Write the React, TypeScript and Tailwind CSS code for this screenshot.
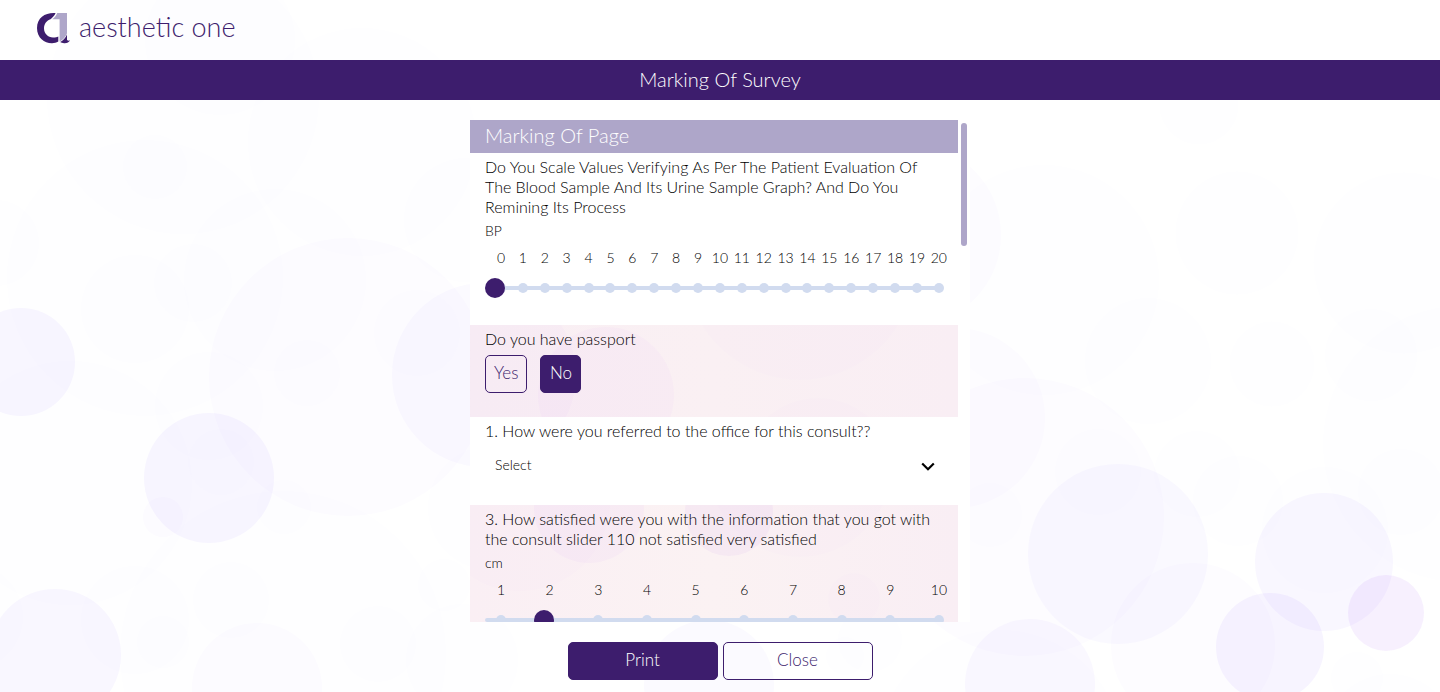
import { useState } from "react";

type Bubble = [cx: number, cy: number, r: number, fill: string];

const FAINT = "#6d4bff02";
const SOFT = "#7a3cff04";
const MEDIUM = "#6a3cff09";
const PINK = "#9a3cf014";

const bubbles: Bubble[] = [
  [145, 278, 138, FAINT],
  [183, 98, 136, FAINT],
  [220, 40, 75, FAINT],
  [362, 142, 114, FAINT],
  [275, 280, 91, FAINT],
  [135, 309, 54, FAINT],
  [193, 283, 39, FAINT],
  [155, 167, 32, FAINT],
  [466, 220, 62, FAINT],
  [-4, 243, 43, FAINT],
  [348, 377, 139, SOFT],
  [484, 375, 92, "#6a3cff07"],
  [307, 373, 33, FAINT],
  [417, 333, 43, FAINT],
  [209, 406, 54, FAINT],
  [70, 483, 122, FAINT],
  [209, 478, 65, "#6a3cff0c"],
  [21, 362, 54, "#6a3cff0c"],
  [163, 517, 20, SOFT],
  [221, 462, 33, FAINT],
  [284, 507, 27, FAINT],
  [490, 508, 62, FAINT],
  [283, 654, 163, FAINT],
  [135, 620, 54, FAINT],
  [163, 642, 26, FAINT],
  [231, 600, 38, FAINT],
  [257, 688, 65, SOFT],
  [378, 644, 38, FAINT],
  [462, 660, 56, FAINT],
  [444, 585, 26, FAINT],
  [-30, 617, 53, FAINT],
  [55, 655, 66, "#6a3cff0b"],
  [709, 685, 65, "#6a3cff07"],
  [845, 656, 19, FAINT],
  [870, 640, 32, FAINT],
  [910, 235, 91, SOFT],
  [955, 418, 90, SOFT],
  [1044, 280, 115, FAINT],
  [1148, 361, 63, FAINT],
  [1237, 233, 62, "#6d4bff01"],
  [1199, 105, 40, "#6d4bff01"],
  [1272, 364, 43, "#6d4bff01"],
  [1404, 263, 91, "#6d4bff01"],
  [1371, 355, 46, FAINT],
  [1461, 444, 138, FAINT],
  [1025, 517, 139, SOFT],
  [1098, 472, 43, FAINT],
  [990, 515, 32, FAINT],
  [1118, 554, 90, "#6a3cff08"],
  [1197, 474, 43, FAINT],
  [1238, 501, 45, FAINT],
  [1325, 530, 63, FAINT],
  [1401, 492, 43, FAINT],
  [1324, 562, 69, "#6a3cff0a"],
  [1193, 645, 82, SOFT],
  [1270, 647, 54, "#6a3cff0e"],
  [1030, 684, 65, MEDIUM],
  [1000, 752, 122, FAINT],
  [1386, 613, 38, PINK],
  [1357, 678, 26, FAINT],
  [1390, 740, 66, FAINT],
];

function PageBackdrop() {
  return (
    <svg
      className="pointer-events-none absolute inset-0 h-full w-full"
      viewBox="0 0 1440 692"
      preserveAspectRatio="xMidYMid slice"
      aria-hidden="true"
    >
      {bubbles.map(([cx, cy, r, fill], i) => (
        <circle key={i} cx={cx} cy={cy} r={r} fill={fill} />
      ))}
    </svg>
  );
}

function TintBackdrop({ shapes }: { shapes: Bubble[] }) {
  return (
    <svg className="pointer-events-none absolute inset-0 h-full w-full" aria-hidden="true">
      {shapes.map(([cx, cy, r, fill], i) => (
        <circle key={i} cx={cx} cy={cy} r={r} fill={fill} />
      ))}
    </svg>
  );
}

function Logo() {
  return (
    <a href="#" className="flex items-center gap-[9px] text-[#3d1d6d]">
      <svg width="34" height="32" viewBox="0 0 34 32" aria-hidden="true">
        <path
          d="M19.600 1C10 .2 1 5 1 16c0 10 7.500 15.300 15 15.200 2.400 0 4.500-.5 6.300-1.600v-5.200c-1.600.8-3.200 1.200-5.300 1.100-5-.2-9-3.700-9-9.200 0-4.600 2.800-7.700 6.500-9.100C16.500 6 18.400 3.600 19.600 1Z"
          fill="#3d1d6d"
        />
        <path d="M21.200 1H31v20.500c-1.500 3.500-3.800 6.300-7.400 8V7.200h-7.400C18.600 5.600 20.300 3.600 21.200 1Z" fill="#aea6c9" />
        <path d="M31 22.500v5.100c0 .9 1 1.300 3 .9-1 1.600-2.700 2.600-5.300 2.700-1.700.1-3.300-.2-4.500-1.100C27 28.500 29.600 26 31 22.500Z" fill="#3d1d6d" />
      </svg>
      <span className="pb-0.5 text-[27px] leading-8 font-light">aesthetic one</span>
    </a>
  );
}

function ScaleSlider({ id, unit, min, max, initial }: { id: string; unit: string; min: number; max: number; initial: number }) {
  const [value, setValue] = useState(initial);
  const ticks = Array.from({ length: max - min + 1 }, (_, i) => min + i);
  return (
    <div className="pt-1">
      <label htmlFor={id} className="block text-sm leading-5">
        {unit}
      </label>
      <div className="-mr-px mt-[7px] flex justify-between pl-[11px] text-sm leading-5">
        {ticks.map((t) => (
          <span key={t} className="flex w-[10px] justify-center">
            {t}
          </span>
        ))}
      </div>
      <div className="relative mt-2 h-6">
        <div className="flex h-full items-center">
          <div className="h-1 flex-1 rounded-full bg-[#d1dbef]" />
        </div>
        <div className="absolute inset-0 -mr-px flex items-center justify-between pl-[11px]">
          {ticks.map((t) => (
            <span key={t} className="size-[10px] rounded-full bg-[#d1dbef]" />
          ))}
        </div>
        <input
          id={id}
          type="range"
          min={min}
          max={max}
          value={value}
          onChange={(e) => setValue(Number(e.target.value))}
          className="absolute inset-0 m-0 h-full w-full cursor-pointer appearance-none bg-transparent [&::-moz-range-thumb]:size-5 [&::-moz-range-thumb]:rounded-full [&::-moz-range-thumb]:border-0 [&::-moz-range-thumb]:bg-[#3d1d6d] [&::-webkit-slider-thumb]:size-5 [&::-webkit-slider-thumb]:appearance-none [&::-webkit-slider-thumb]:rounded-full [&::-webkit-slider-thumb]:bg-[#3d1d6d]"
        />
      </div>
    </div>
  );
}

const filled = "border-[#3d1d6d] bg-[#3d1d6d] text-white";
const outlined = "border-[#3d1d6d] text-[#3d1d6d]";

export default function App() {
  const [passport, setPassport] = useState("No");
  return (
    <div className="relative flex h-screen flex-col overflow-hidden bg-white font-[Lato,sans-serif] font-light text-black">
      <PageBackdrop />
      <header className="relative flex h-[60px] shrink-0 items-center px-9 pb-1">
        <Logo />
      </header>
      <h1 className="relative shrink-0 bg-[#3d1d6d] pb-0.5 text-center text-xl leading-[38px] font-light text-white">Marking Of Survey</h1>

      <main className="relative mx-auto mt-5 flex min-h-0 w-full max-w-[500px] flex-1 bg-white">
        <div className="min-w-0 flex-1 overflow-y-auto [scrollbar-width:none]">
          <h2 className="bg-[#aea6c9] px-[15px] pb-0.5 text-xl leading-[31px] font-light text-white">Marking Of Page</h2>

          <section className="px-[15px] pt-1 pb-[25px]">
            <p className="text-base leading-5">
              Do You Scale Values Verifying As Per The Patient Evaluation Of The Blood Sample And Its Urine Sample Graph? And Do You Remining Its
              Process
            </p>
            <ScaleSlider id="bp" unit="BP" min={0} max={20} initial={0} />
          </section>

          <section className="relative bg-linear-to-r from-[#f9eff4] via-[#faf0f3] to-[#f9eef4] px-[15px] pt-1 pb-6">
            <TintBackdrop
              shapes={[
                [14, 50, 92, "#9a3cf005"],
                [136, 70, 68, "#9a3cf006"],
                [330, -60, 115, "#9a3cf002"],
                [348, 150, 77, "#9a3cf002"],
              ]}
            />
            <div className="relative">
              <p id="passport" className="text-base leading-5">
                Do you have passport
              </p>
              <div role="group" aria-labelledby="passport" className="mt-1.5 flex gap-[13px]">
                {["Yes", "No"].map((option) => (
                  <button
                    key={option}
                    type="button"
                    aria-pressed={passport === option}
                    onClick={() => setPassport(option)}
                    className={`h-[38px] min-w-[41px] rounded-[5px] border px-2 pb-0.5 text-[17px] ${passport === option ? filled : outlined}`}
                  >
                    {option}
                  </button>
                ))}
              </div>
            </div>
          </section>

          <section className="px-[15px] pt-1 pb-5">
            <label htmlFor="referral" className="block text-base leading-5">
              1. How were you referred to the office for this consult??
            </label>
            <div className="relative mt-1.5">
              <select id="referral" className="h-[38px] w-full appearance-none bg-transparent px-[10px] pb-0.5 text-sm">
                <option>Select</option>
              </select>
              <svg
                className="pointer-events-none absolute top-[15px] right-2"
                width="14"
                height="10"
                viewBox="0 0 14 10"
                fill="none"
                stroke="#000"
                strokeWidth="2.200"
                aria-hidden="true"
              >
                <path d="M1.200 1.500 7 7.200l5.800-5.700" />
              </svg>
            </div>
          </section>

          <section className="relative bg-linear-to-r from-[#faeff4] via-[#fbf2f3] to-[#f9eef4] px-[15px] pt-1 pb-[25px]">
            <TintBackdrop
              shapes={[
                [119, 3, 55, "#9a3cf008"],
                [259, 7, 44, "#9a3cf00c"],
                [50, -4, 90, "#9a3cf003"],
                [330, -40, 92, "#9a3cf002"],
                [384, 94, 26, "#9a3cf002"],
              ]}
            />
            <div className="relative">
              <p className="text-base leading-5">
                3. How satisfied were you with the information that you got with the consult slider 110 not satisfied very satisfied
              </p>
              <ScaleSlider id="satisfaction" unit="cm" min={1} max={10} initial={2} />
            </div>
          </section>
        </div>
        <div className="w-3 shrink-0 p-[3px]" aria-hidden="true">
          <div className="h-[123px] w-1.5 rounded-full bg-[#aea6c9]" />
        </div>
      </main>

      <footer className="relative flex shrink-0 justify-center gap-[5px] pt-5 pb-3">
        <button type="button" className={`h-[38px] w-[150px] rounded-[5px] border pb-0.5 text-[17px] ${filled}`}>
          Print
        </button>
        <button type="button" className={`h-[38px] w-[150px] rounded-[5px] border pb-0.5 text-[17px] ${outlined}`}>
          Close
        </button>
      </footer>
    </div>
  );
}
